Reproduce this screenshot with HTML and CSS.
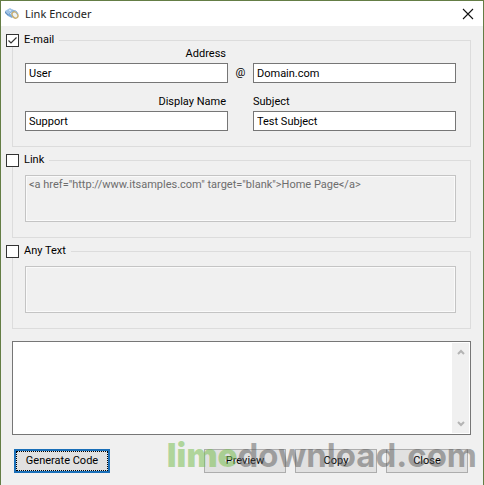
FILE: index.html
```
<!DOCTYPE html>
<html lang="en">

<head>
    <meta charset="UTF-8">
    <meta name="viewport" content="width=device-width, initial-scale=1.0">
    <title>Link Encoder</title>
    <link rel="stylesheet" href="styles.css">
</head>

<body>
    <div class="window">
        <header class="titlebar">
            <svg class="logo" width="16" height="16" viewBox="0 0 16 16">
                <path d="M1 5l5-3 3 2-5 4z" fill="#9fc3e6" />
                <path d="M1 5l3 3v2L1 7z" fill="#5f8fc4" />
                <path d="M4 8l5-4 4 3-5 5-4-2z" fill="#79a9d8" />
                <path d="M5 4l2 1M6 8l3-2M7 9l3-2" stroke="#e4f1fb" fill="none" />
                <ellipse cx="11" cy="9" rx="2.6" ry="3.4" transform="rotate(-35 11 9)" fill="#eef3f5" stroke="#c9ad6c" stroke-width="1.4" />
                <path d="M8 4l4 1 2 3" fill="none" stroke="#8fb3d9" />
            </svg>
            <h1>Link Encoder</h1>
            <button type="button" class="close" aria-label="Close window">
                <svg width="12" height="12" viewBox="0 0 12 12">
                    <path d="M1 1l10 10M11 1L1 11" stroke="#111" stroke-width="1.1" fill="none" />
                </svg>
            </button>
        </header>
        <form class="content">
            <fieldset>
                <legend>
                    <input type="checkbox" id="useMail" checked>
                    <label for="useMail">E-mail</label>
                </legend>
                <div class="fields">
                    <label class="right" for="user">Address</label>
                    <input class="first" type="text" id="user" value="User">
                    <span class="at">@</span>
                    <input type="text" id="domain" value="Domain.com" aria-label="Domain">
                </div>
                <div class="fields">
                    <label class="right" for="display">Display Name</label>
                    <label class="last" for="subject">Subject</label>
                    <input class="first" type="text" id="display" value="Support">
                    <input class="last" type="text" id="subject" value="Test Subject">
                </div>
            </fieldset>
            <fieldset>
                <legend>
                    <input type="checkbox" id="useLink">
                    <label for="useLink">Link</label>
                </legend>
                <textarea class="source" aria-label="Link code" disabled>&lt;a href="http://www.itsamples.com" target="blank"&gt;Home Page&lt;/a&gt;</textarea>
            </fieldset>
            <fieldset>
                <legend>
                    <input type="checkbox" id="useText">
                    <label for="useText">Any Text</label>
                </legend>
                <textarea class="source" aria-label="Text to encode" disabled></textarea>
            </fieldset>
            <div class="output">
                <textarea aria-label="Generated code"></textarea>
                <div class="scrollbar">
                    <svg width="8" height="6" viewBox="0 0 8 6">
                        <path d="M1 5l3-3 3 3" />
                    </svg>
                    <svg width="8" height="6" viewBox="0 0 8 6">
                        <path d="M1 1l3 3 3-3" />
                    </svg>
                </div>
            </div>
            <div class="buttons">
                <button type="button" class="default">Generate Code</button>
                <button type="button">Preview</button>
                <button type="button">Copy</button>
                <button type="button">Close</button>
                <div class="watermark"><span>lime</span>download.com</div>
            </div>
        </form>
    </div>
</body>

</html>
```

FILE: styles.css
```
* {
    box-sizing: border-box;
}

body,
h1,
fieldset,
legend {
    margin: 0;
    padding: 0;
}

body,
button,
input,
textarea {
    font: 11px/14px Roboto, "Liberation Sans", sans-serif;
    color: #000;
}

input,
textarea,
button {
    margin: 0;
    border-radius: 0;
    outline: none;
}

.window {
    min-height: 100vh;
    border: 1px solid #647d45;
    background: #f0f0f0;
}

/* title bar */
.titlebar {
    display: flex;
    align-items: center;
    height: 25px;
    padding: 0 9px 0 3px;
    background: #fff;
}

.titlebar h1 {
    flex: 1;
    margin-left: 5px;
    font: 11px/16px "Noto Sans", sans-serif;
    color: #222;
}

.close {
    display: flex;
    padding: 0;
    border: 0;
    background: none;
}

.content {
    padding: 7px 12px 12px 11px;
}

/* groups */
fieldset {
    min-width: 0;
    margin-bottom: 6px;
    padding: 0 14px 15px 12px;
    border: 1px solid #dcdcdc;
}

legend {
    display: flex;
    align-items: center;
    gap: 5px;
    height: 14px;
    margin-left: -19px;
    padding-right: 5px;
}

input[type="checkbox"] {
    appearance: none;
    width: 13px;
    height: 13px;
    border: 1px solid #333;
    background: #fff;
}

input[type="checkbox"]:checked {
    background: #fff url("data:image/svg+xml,%3Csvg xmlns='http://www.w3.org/2000/svg' viewBox='0 0 11 11'%3E%3Cpath d='M1.5 5.5l2.5 2.5 5.5-5.5' fill='none' stroke='%23333' stroke-width='1.2'/%3E%3C/svg%3E");
}

.fields {
    display: grid;
    grid-template-columns: 1fr 25px 1fr;
    row-gap: 2px;
}

.fields + .fields {
    margin-top: 12px;
}

.right {
    grid-column: 1;
    padding-right: 2px;
    text-align: right;
}

.first {
    grid-column: 1;
}

.last {
    grid-column: 3;
}

.at {
    line-height: 20px;
    text-align: center;
}

input[type="text"] {
    width: 100%;
    height: 20px;
    padding: 0 3px;
    border: 1px solid #767676;
    background: #fff;
}

textarea {
    display: block;
    width: 100%;
    padding: 2px 3px;
    border: 0;
    background: #fff;
    resize: none;
}

.source {
    height: 47px;
    margin-top: 8px;
    border: 1px solid #c4c4c4;
    box-shadow: inset 0 0 0 1px #fafafa;
    background: #f0f0f0;
    color: #6d6d6d;
}

/* result */
.output {
    display: flex;
    height: 94px;
    margin-top: 12px;
    padding: 1px;
    border: 1px solid #767676;
    background: #fff;
}

.output textarea {
    flex: 1;
}

.scrollbar {
    display: flex;
    flex-direction: column;
    align-items: center;
    justify-content: space-between;
    width: 17px;
    padding: 6px 0;
    background: #f0f0f0;
}

.scrollbar path {
    fill: none;
    stroke: #b4b4b4;
    stroke-width: 2;
}

.buttons {
    position: relative;
    display: flex;
    gap: 9px;
    margin-top: 14px;
    padding: 0 3px 0 2px;
}

.buttons button {
    width: 82px;
    height: 24px;
    padding: 0;
    border: 1px solid #adadad;
    background: #e1e1e1;
}

.buttons .default {
    width: 96px;
    margin-right: auto;
    border: 2px solid #1a6fb8;
    outline: 1px dotted #000;
    outline-offset: -3px;
}

.watermark {
    position: absolute;
    right: -6px;
    bottom: 0;
    font: bold 33px/36px Inter, sans-serif;
    color: rgba(90, 90, 90, .5);
    pointer-events: none;
}

.watermark span {
    font-weight: 900;
    color: rgba(120, 190, 80, .55);
}
```
